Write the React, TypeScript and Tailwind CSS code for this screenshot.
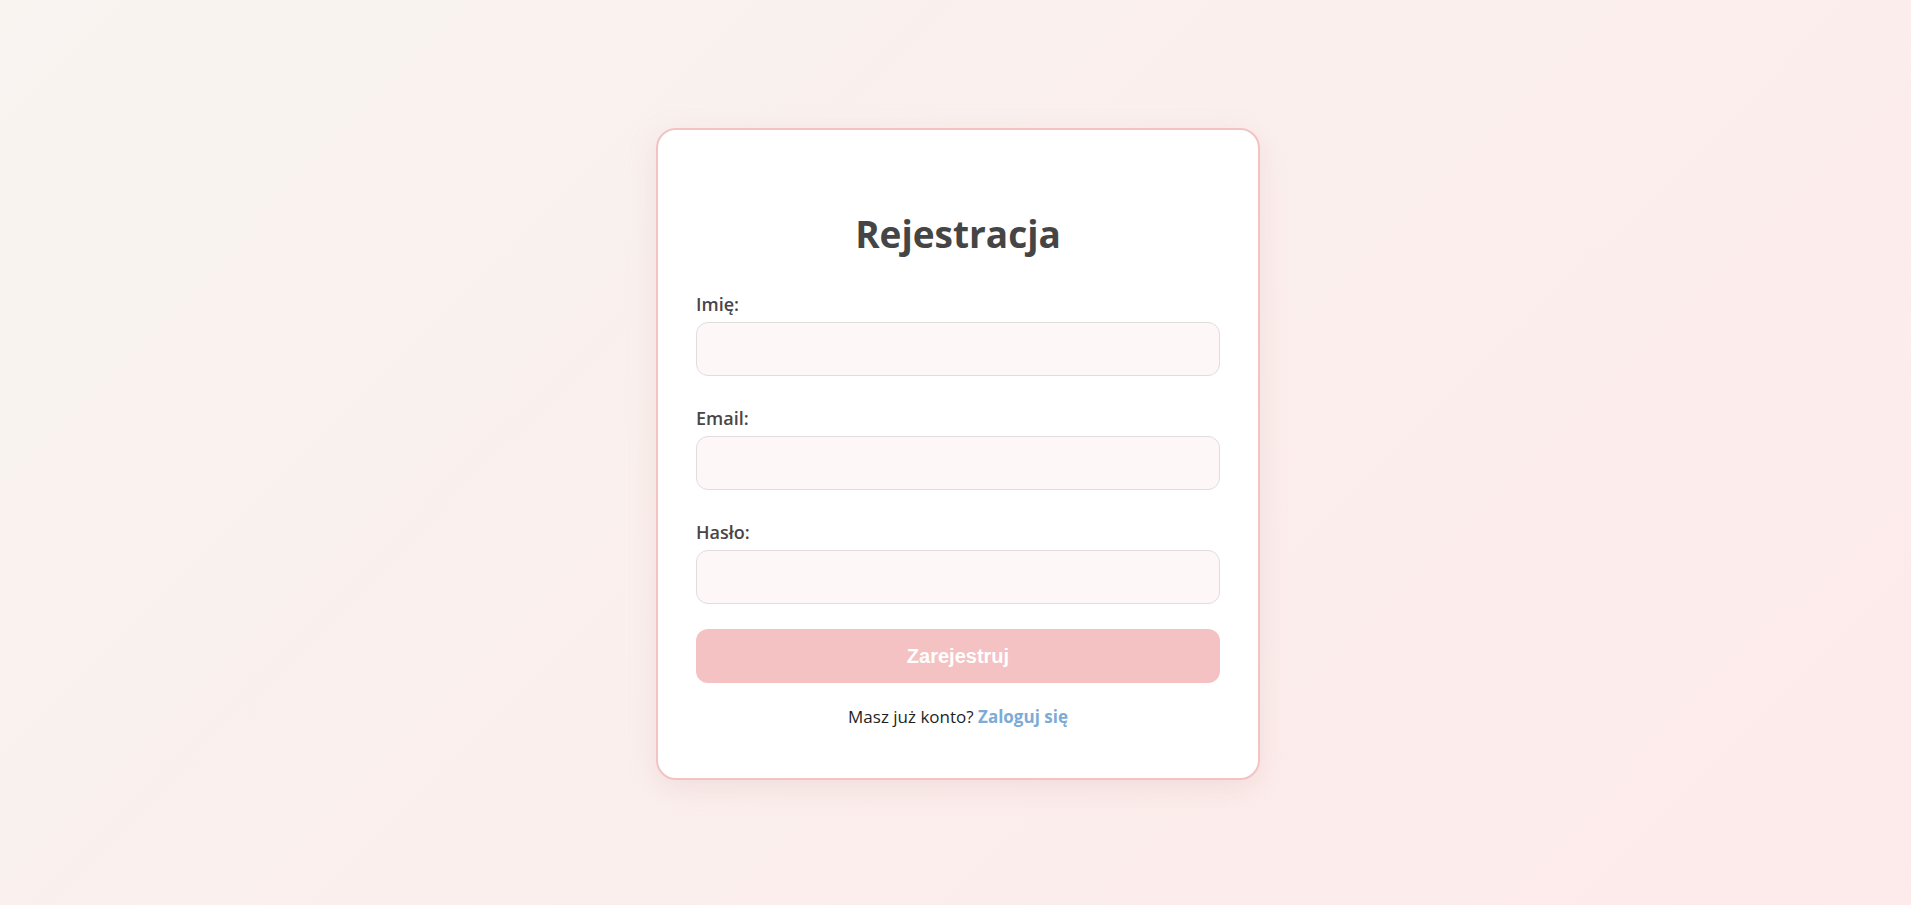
import React from 'react';

const fieldGroups = [
  { label: 'Imię:', type: 'text', gap: 'mb-[30px]' },
  { label: 'Email:', type: 'email', gap: 'mb-[30px]' },
  { label: 'Hasło:', type: 'password', gap: 'mb-[25px]' },
];

const App: React.FC = () => {
  return (
    <div className="min-h-screen w-full flex items-center justify-center pl-[5px] pt-[3px] bg-[linear-gradient(135deg,#f8f4f0_0%,#fdeaea_100%)] font-['Open_Sans',sans-serif]">
      <div className="w-[604px] bg-white border-2 border-[#f3c3c3] rounded-[20px] shadow-[0_8px_28px_rgba(210,160,160,0.22)] px-[38px] pt-[80px] pb-[49px]">
        <h2 className="text-center text-[37px] leading-[48px] font-bold text-[#454545] mb-[34px]">
          Rejestracja
        </h2>

        <form onSubmit={(e) => e.preventDefault()}>
          {fieldGroups.map((field) => (
            <div key={field.label} className={field.gap}>
              <label className="block text-[18px] leading-6 font-semibold text-[#4a4545] mb-[6px]">
                {field.label}
              </label>
              <input
                type={field.type}
                className="block w-full h-[54px] rounded-[12px] border border-[#e2dcdc] bg-[#fdf7f7] px-4 outline-none"
              />
            </div>
          ))}

          <button
            type="submit"
            className="block w-full h-[54px] rounded-[12px] bg-[#f4c2c2] text-white text-[20px] font-bold font-['Liberation_Sans',Arial,sans-serif]"
          >
            Zarejestruj
          </button>
        </form>

        <p className="mt-[22px] text-center text-[17px] leading-6 text-[#1f1f1f]">
          Masz już konto?{' '}
          <a href="#" className="font-bold text-[#7eaad6]">
            Zaloguj się
          </a>
        </p>
      </div>
    </div>
  );
};

export default App;
